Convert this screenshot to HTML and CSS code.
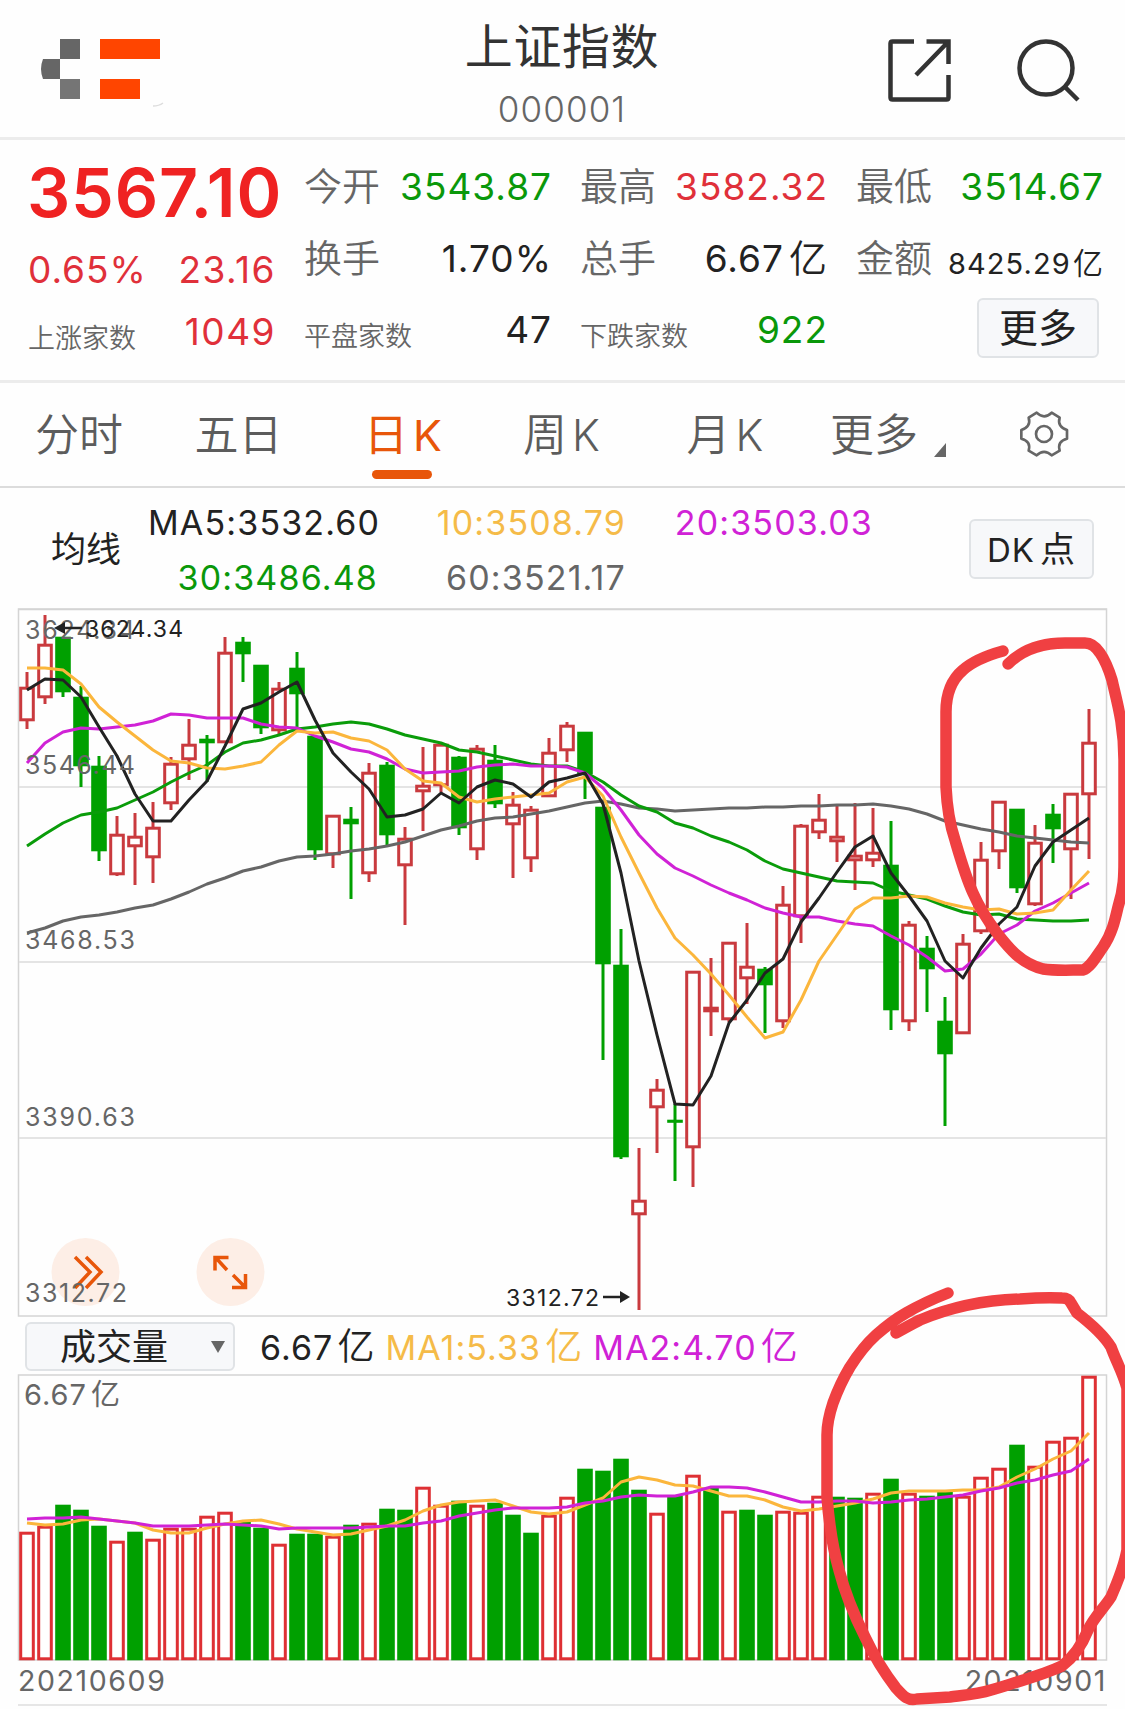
FILE: index.html
```
<!DOCTYPE html>
<html lang="zh-CN">
<head>
    <meta charset="UTF-8">
    <meta name="viewport" content="width=device-width, initial-scale=1.0">
    <title>上证指数 000001</title>
    <link rel="stylesheet" href="styles.css">
</head>
<body>
    <div class="page">
        <header class="header">
            <svg class="logo" width="130" height="72" viewBox="0 0 130 72">
                <path fill="#666" d="M20 0h20v20H20zM3 20h17v20H3q-4-10 0-20z"/>
                <path fill="#757575" d="M20 40h20v20H20z"/>
                <path fill="#ff4500" d="M60 0h60v20H60zM60 40h40v20H60z"/>
                <path fill="none" stroke="#ddd" stroke-width="1.5" d="M113 67q6 0 10-3"/>
            </svg>
            <div class="title">
                <h1>上证指数</h1>
                <p>000001</p>
            </div>
            <div class="actions">
                <svg width="64" height="64" viewBox="0 0 64 64" fill="none" stroke="#333" stroke-width="4.5">
                    <path d="M26 2.5H4.5q-2 0-2 2v54q0 2 2 2h54q2 0 2-2V36"/>
                    <path d="M38.5 2.5H60.5V25M60 3L28 36"/>
                </svg>
                <svg width="64" height="64" viewBox="0 0 64 64" fill="none" stroke="#333" stroke-width="4.5">
                    <circle cx="30" cy="29" r="26.5"/>
                    <path d="M48.5 47.5L62 61"/>
                </svg>
            </div>
        </header>

        <section class="quote">
            <div class="quote-col main">
                <div class="row"><b class="price">3567.10</b></div>
                <div class="row red"><span>0.65%</span><span>23.16</span></div>
                <div class="row"><label class="small">上涨家数</label><span class="red">1049</span></div>
            </div>
            <div class="quote-col">
                <div class="row"><label>今开</label><span class="green">3543.87</span></div>
                <div class="row"><label>换手</label><span>1.70%</span></div>
                <div class="row"><label class="small">平盘家数</label><span>47</span></div>
            </div>
            <div class="quote-col">
                <div class="row"><label>最高</label><span class="red">3582.32</span></div>
                <div class="row"><label>总手</label><span>6.67<i>亿</i></span></div>
                <div class="row"><label class="small">下跌家数</label><span class="green">922</span></div>
            </div>
            <div class="quote-col">
                <div class="row"><label>最低</label><span class="green">3514.67</span></div>
                <div class="row"><label>金额</label><span class="amount">8425.29<i>亿</i></span></div>
                <div class="row end"><button class="btn more">更多</button></div>
            </div>
        </section>

        <nav class="tabs">
            <a>分时</a>
            <a>五日</a>
            <a class="active">日<em>K</em></a>
            <a>周<em>K</em></a>
            <a>月<em>K</em></a>
            <a>更多</a>
            <svg class="corner" width="12" height="14" viewBox="0 0 12 14"><path fill="#666" d="M12 0v14H0z"/></svg>
            <svg class="gear" width="50" height="50" viewBox="297 57 150 150" fill="none" stroke="#666" stroke-width="8" stroke-linejoin="round">
                <path d="M350 68Q372 90 395 68L419 83Q411 110 441 120V146Q411 154 419 182L395 196Q372 175 350 196L326 182Q334 154 304 146V120Q334 110 326 83Z"/>
                <circle cx="372" cy="132" r="24"/>
            </svg>
        </nav>

        <section class="ma">
            <div class="ma-name">均线</div>
            <div class="ma-values">
                <span>MA5:3532.60</span><span class="orange">10:3508.79</span><span class="purple">20:3503.03</span>
                <span class="green">30:3486.48</span><span class="gray">60:3521.17</span>
            </div>
            <button class="btn dk">DK<i>点</i></button>
        </section>

        <svg id="kline" class="chart" width="1125" height="710" viewBox="0 608 1125 710"></svg>

        <section class="vol-bar">
            <button class="btn select">成交量<svg width="14" height="12" viewBox="0 0 14 12"><path fill="#666" d="M0 0h14L7 12z"/></svg></button>
            <span>6.67<i>亿</i></span>
            <span class="orange">MA1:5.33<i>亿</i></span>
            <span class="purple">MA2:4.70<i>亿</i></span>
        </section>

        <svg id="volume" class="chart" width="1125" height="288" viewBox="0 1374 1125 288"></svg>

        <footer class="dates">
            <span>20210609</span>
            <span>20210901</span>
        </footer>

        <!-- hand-drawn marks over both charts -->
        <svg class="marks" width="1125" height="1709" viewBox="0 0 1125 1709">
            <path d="M1003 651C985 656 973 661 963 670C950 681 946 695 946 712V787C947 808 949 822 955 840C960 857 965 875 973 893C980 909 988 921 997 933C1008 947 1020 963 1043 969C1056 971 1070 970 1083 970C1090 968 1096 957 1103 947C1112 934 1115 920 1118 907C1124 888 1124 875 1124 860V760C1124 725 1117 702 1112 680C1108 667 1105 660 1100 653C1096 647 1092 643 1085 643H1065C1045 643 1024 648 1008 664"/>
            <path d="M948 1293C930 1300 918 1306 906 1313C892 1321 884 1328 876 1335C865 1345 857 1356 850 1367C841 1382 837 1392 833 1403C829 1415 827 1424 827 1435V1497C829 1523 833 1549 839 1570C846 1597 855 1617 865 1637C874 1656 886 1675 896 1688C904 1697 908 1701 917 1699L950 1697C966 1695 979 1694 991 1690C1020 1681 1043 1675 1062 1666C1075 1656 1082 1645 1088 1630C1094 1617 1104 1608 1111 1597C1118 1581 1124 1567 1127 1550V1388C1123 1373 1116 1361 1111 1347C1103 1334 1090 1323 1077 1313L1071 1303Q1069 1298 1062 1298Q1045 1297 1020 1299C985 1300 949 1308 920 1320C910 1325 903 1329 896 1333"/>
        </svg>
    </div>
    <script src="script.js"></script>
</body>
</html>
```
FILE: styles.css
```
* {
    margin: 0;
    padding: 0;
    box-sizing: border-box;
    font-family: Inter, "Noto Sans CJK SC", sans-serif;
}

body {
    background: #fefefe;
}

i, em {
    font-style: normal;
}

.page {
    position: relative;
    width: 1125px;
    height: 1709px;
    overflow: hidden;
    color: #222;
}

.red { color: #e0303a; }
.green { color: #0a980a; }
.orange { color: #f5bb48; }
.purple { color: #d022d6; }
.gray { color: #666; }

.header {
    display: flex;
    justify-content: space-between;
    height: 140px;
    padding: 0 45px 0 40px;
    border-bottom: 3px solid #ececec;
}

.logo {
    margin-top: 39px;
}

.title {
    text-align: center;
    padding-left: 66px;
}

.title h1 {
    font-size: 48px;
    font-weight: 400;
    line-height: 60px;
    letter-spacing: 0.6px;
    margin-top: 17px;
    color: #333;
}

.title p {
    font-size: 35px;
    font-weight: 350;
    line-height: 40px;
    letter-spacing: 1.1px;
    margin-top: 12px;
    color: #666;
}

.actions {
    display: flex;
    gap: 64px;
    padding-top: 39px;
}

.quote {
    display: flex;
    gap: 29px;
    height: 243px;
    padding: 10px 22px 0 28px;
    border-bottom: 3px solid #ececec;
}

.quote-col {
    width: 247px;
    font-size: 37px;
}

.row {
    display: flex;
    justify-content: space-between;
    align-items: baseline;
    height: 72px;
    line-height: 72px;
    white-space: nowrap;
}

.row span {
    letter-spacing: 1px;
    margin-right: -1px;
}

.row label {
    font-size: 38px;
    font-weight: 350;
    color: #666;
}

.row label.small {
    font-size: 27px;
    position: relative;
    top: 3px;
}

.row i {
    font-size: 38px;
    font-weight: 350;
    margin-left: 5px;
}

.row .amount {
    font-size: 29px;
    letter-spacing: 1.1px;
    position: relative;
    top: 2px;
}

.row .amount i {
    font-size: 30px;
    margin-left: 2px;
}

.row.end {
    justify-content: flex-end;
    align-items: center;
    padding: 0 4px 4px 0;
}

.main .row:nth-child(1) {
    height: 84px;
    line-height: 84px;
}

.main .row:nth-child(3) {
    height: 51px;
    line-height: 51px;
}

.main .row span:last-child {
    letter-spacing: 1.5px;
}

.price {
    font-size: 68px;
    font-weight: 600;
    letter-spacing: 0.8px;
    margin-left: -1px;
    color: #ef2222;
}

.btn {
    background: #f7f8fa;
    border: 2px solid #e0e3e6;
    border-radius: 6px;
    color: #222;
}

.btn.more {
    width: 122px;
    height: 60px;
    font-size: 39px;
    line-height: 54px;
}

.tabs {
    display: flex;
    height: 105px;
    border-bottom: 2px solid #dcdcdc;
    font-size: 44px;
    font-weight: 350;
    line-height: 104px;
    color: #5c5c5c;
}

.tabs a {
    position: relative;
    text-align: center;
}

.tabs a:nth-child(1) { width: 158px; }
.tabs a:nth-child(2) { width: 161px; }
.tabs a:nth-child(3) { width: 168px; }
.tabs a:nth-child(4) { width: 149px; }
.tabs a:nth-child(5) { width: 178px; }
.tabs a:nth-child(6) { width: 120px; }

.tabs em {
    font-size: 43px;
    margin-left: 5px;
}

.tabs .active {
    color: #e8560a;
    font-weight: 400;
}

.tabs .active::after {
    content: "";
    position: absolute;
    left: 53px;
    bottom: 7px;
    width: 60px;
    height: 9px;
    border-radius: 5px;
    background: #e8560a;
}

.corner {
    margin-top: 60px;
}

.gear {
    margin: 26px 0 0 73px;
}

.ma {
    display: flex;
    height: 120px;
    padding-right: 31px;
}

.ma-name {
    width: 148px;
    padding-left: 51px;
    font-size: 35px;
    line-height: 123px;
}

.ma-values {
    display: grid;
    grid-template-columns: 230px 248px 247px;
    grid-auto-rows: 55px;
    align-content: start;
    width: 821px;
    padding-top: 7px;
    font-size: 34px;
    line-height: 55px;
    letter-spacing: 1.15px;
    text-align: right;
    white-space: nowrap;
}

.btn.dk {
    width: 125px;
    height: 60px;
    margin-top: 31px;
    padding-bottom: 5px;
    font-size: 33px;
    letter-spacing: 1px;
}

.dk i {
    font-size: 35px;
    margin-left: 5px;
}

.chart {
    display: block;
}

.vol-bar {
    display: flex;
    height: 56px;
    padding: 4px 0 0 25px;
    font-size: 34px;
    line-height: 50px;
    letter-spacing: 1.05px;
    white-space: nowrap;
}

.vol-bar i {
    font-size: 37px;
    font-weight: 350;
    margin-left: 4px;
}

.vol-bar span {
    margin-right: 10px;
}

.btn.select {
    display: flex;
    align-items: center;
    justify-content: space-between;
    width: 210px;
    height: 49px;
    margin-right: 25px;
    padding: 0 8px 0 33px;
    font-size: 36px;
    line-height: 42px;
}

.dates {
    display: flex;
    justify-content: space-between;
    height: 44px;
    margin: 0 18px;
    border-bottom: 2px solid #e6e6e6;
    font-size: 28.5px;
    line-height: 38px;
    letter-spacing: 1.6px;
    color: #666;
}

.marks {
    position: absolute;
    left: 0;
    top: 0;
    fill: none;
    stroke: #f04042;
    stroke-width: 11.5;
    stroke-linecap: round;
    stroke-linejoin: round;
}

.frame { fill: none; stroke: #d4d4d4; stroke-width: 1.5; }
.grid-line { stroke: #e4e4e4; stroke-width: 2; }
.up { fill: #fff; stroke: #c93a3e; stroke-width: 3; }
.up-vol { fill: #fff; stroke: #de3034; stroke-width: 3; }
.down { fill: #00a000; stroke: #00a000; stroke-width: 3; }
.line { fill: none; stroke-width: 3; stroke-linejoin: round; }
.axis { fill: #666; font-size: 25px; }
.axis.big { font-size: 29px; }
.mark { fill: #222; font-size: 23px; }
.arrow { stroke: #222; stroke-width: 2.5; fill: #222; }
.bubble { fill: #fdeee6; }
.icon { fill: none; stroke: #e8560a; stroke-width: 3.5; }
```
FILE: script.js
```
// direction, high, body top, body bottom, low
const candles = [
    ['u',672,687,721,729],['u',615,644,698,704],['d',637,637,692,697],['d',686,697,766,787],['d',756,766,851,861],
    ['u',816,834,875,876],['u',813,836,847,885],['u',802,827,858,883],['u',757,763,804,810],['u',719,744,760,780],
    ['d',735,739,743,782],['u',637,652,743,743],['d',637,642,654,682],['d',665,665,728,734],['u',682,688,731,736],
    ['d',652,668,694,728],['d',736,736,850,860],['u',815,815,855,868],['d',807,819,824,899],['u',763,772,874,882],
    ['d',762,765,835,846],['u',827,838,866,925],['u',747,785,792,831],['u',742,744,786,792],['d',756,757,828,835],
    ['u',745,748,850,860],['d',745,760,804,808],['u',792,804,825,878],['u',806,809,859,872],['u',738,752,797,797],
    ['u',722,725,751,762],['d',732,732,774,799],['d',807,807,964,1060],['d',929,965,1157,1159],['u',1148,1200,1215,1310],
    ['u',1079,1089,1108,1153],['d',1104,1120,1122,1181],['u',971,971,1148,1187],['u',958,1007,1012,1036],['u',942,942,1020,1022],
    ['u',923,966,979,1004],['d',967,969,985,1033],['u',886,904,1022,1028],['u',824,825,917,943],['u',794,819,833,839],
    ['u',804,836,842,862],['u',803,855,861,890],['u',808,852,861,867],['d',821,865,1010,1030],['u',921,924,1022,1031],
    ['d',936,948,969,1012],['d',997,1021,1054,1126],['u',934,943,1034,1034],['u',842,859,932,934],['u',801,801,852,869],
    ['d',809,809,888,893],['u',825,842,905,906],['d',804,814,829,863],['u',793,793,850,899],['u',709,742,795,859]
];

const ma = {
    '#666': [933,928,921,917,915,912,908,905,899,892,884,878,871,867,861,857,856,854,851,849,846,842,836,830,826,821,818,817,814,811,807,803,801,804,808,809,811,810,809,808,808,807,807,806,806,805,805,804,806,809,814,821,825,829,832,836,838,840,842,843],
    '#0a9c0a': [846,834,823,815,812,808,800,792,782,773,765,752,743,740,735,729,727,724,722,724,729,735,739,743,750,752,756,760,764,766,766,772,782,795,806,812,823,828,836,842,850,861,869,873,877,881,882,883,891,895,899,906,912,915,914,919,920,921,921,920],
    '#d022d6': [763,743,732,728,729,727,725,721,714,715,718,718,718,724,727,728,736,742,749,752,759,769,773,772,771,767,765,764,766,766,767,773,788,810,835,854,868,876,885,893,900,908,913,917,917,921,924,926,936,945,957,971,969,954,934,925,911,903,893,883],
    '#fbb63c': [668,668,670,684,707,722,736,750,761,763,768,769,766,762,745,731,733,732,738,741,750,769,781,783,797,802,799,797,795,793,782,777,796,837,873,908,938,955,974,995,1017,1038,1032,1000,961,935,909,898,898,896,897,903,907,910,909,914,913,910,890,871],
    '#222': [690,679,680,697,727,756,794,821,821,800,781,746,709,703,692,682,720,753,772,789,817,815,809,793,803,787,780,784,797,782,778,773,804,873,961,1035,1104,1105,1076,1023,1000,973,959,922,898,872,847,836,873,896,921,961,978,948,924,907,866,842,830,818]
};

// direction, then y of the bar top
const volumes = [
    ['u',1532],['u',1526],['d',1505],['d',1510],['d',1526],['u',1541],['d',1532],['u',1539],['u',1528],['u',1528],
    ['u',1516],['u',1512],['d',1522],['d',1528],['u',1544],['d',1534],['d',1534],['u',1536],['d',1525],['u',1523],
    ['d',1509],['d',1510],['u',1487],['u',1505],['d',1501],['u',1505],['d',1503],['d',1515],['d',1533],['u',1515],
    ['u',1497],['d',1469],['d',1471],['d',1459],['d',1490],['u',1513],['d',1496],['u',1475],['d',1488],['u',1511],
    ['d',1510],['d',1515],['u',1511],['u',1512],['u',1496],['d',1497],['d',1498],['u',1493],['d',1479],['u',1493],
    ['d',1496],['d',1492],['u',1496],['u',1477],['u',1468],['d',1445],['u',1466],['u',1441],['u',1437],['u',1376]
];

const volumeMa = {
    '#fbb63c': [1523,1525,1524,1520,1519,1521,1523,1530,1533,1533,1528,1524,1521,1520,1524,1529,1532,1535,1534,1530,1526,1520,1511,1505,1502,1501,1500,1506,1512,1514,1512,1505,1498,1482,1477,1480,1485,1486,1491,1496,1496,1500,1507,1511,1509,1506,1503,1499,1493,1491,1491,1491,1490,1490,1487,1477,1469,1459,1451,1433],
    '#d022d6': [1519,1518,1518,1517,1519,1521,1523,1526,1526,1526,1525,1524,1525,1526,1529,1528,1528,1528,1528,1527,1526,1526,1523,1521,1516,1513,1510,1508,1508,1508,1507,1503,1501,1497,1495,1496,1496,1492,1487,1487,1488,1492,1497,1502,1502,1501,1501,1503,1502,1500,1499,1497,1495,1491,1488,1483,1480,1475,1471,1459]
};

const x = i => 27 + 18 * i;

function bar(cls, i, top, bottom) {
    const h = Math.max(bottom - top - 2.4, 0.1);
    return `<rect class="${cls}" x="${x(i) - 6.3}" y="${top + 1.2}" width="12.6" height="${h}"/>`;
}

function lines(set) {
    return Object.entries(set).map(([color, ys]) =>
        `<polyline class="line" stroke="${color}" points="${ys.map((y, i) => x(i) + ',' + y).join(' ')}"/>`).join('');
}

function label(cls, left, y, width, text) {
    return `<text class="${cls}" x="${left}" y="${y}" textLength="${width}">${text}</text>`;
}

let k = '<rect class="frame" x="18.5" y="609" width="1088" height="707"/><path class="frame" d="M18 609.5H1107"/>';
[787, 962, 1138].forEach(y => k += `<path class="grid-line" d="M19 ${y}H1106"/>`);
k += '<circle class="bubble" cx="85.5" cy="1272" r="34"/><circle class="bubble" cx="230.5" cy="1272" r="34"/>';
k += '<path class="icon" d="M75 1257L90 1272L75 1288M86 1257L101 1272L86 1288"/>';
k += '<path class="icon" d="M228.5 1257.5H215V1270.5M216 1258L227 1270M232 1287.5H245.5V1274M245 1287L233 1275"/>';
candles.forEach(([dir, high, top, bottom, low], i) => {
    const cls = dir === 'u' ? 'up' : 'down';
    k += `<path class="${cls}" d="M${x(i)} ${high}V${top}M${x(i)} ${bottom}V${low}"/>` + bar(cls, i, top, bottom);
});
k += lines(ma);
k += label('axis', 25, 639, 110, '3624.34') + label('axis', 25, 774, 110, '3546.44') + label('axis', 25, 949, 110, '3468.53');
k += label('axis', 25, 1126, 110, '3390.63') + label('axis', 25, 1302, 102, '3312.72');
k += label('mark', 85, 637, 98, '3624.34') + label('mark', 506, 1306, 93, '3312.72');
k += '<path class="arrow" d="M82 628H60"/><path fill="#222" d="M54 628l11-6v12z"/>';
k += '<path class="arrow" d="M603 1297H624"/><path fill="#222" d="M630 1297l-10-6v12z"/>';
document.getElementById('kline').innerHTML = k;

let v = '<rect class="frame" x="18.5" y="1375" width="1088" height="285"/>';
volumes.forEach(([dir, top], i) => v += bar(dir === 'u' ? 'up-vol' : 'down', i, top, 1660));
v += lines(volumeMa);
v += label('axis big', 24, 1405, 62, '6.67') + label('axis big', 91, 1405, 30, '亿');
document.getElementById('volume').innerHTML = v;
```
